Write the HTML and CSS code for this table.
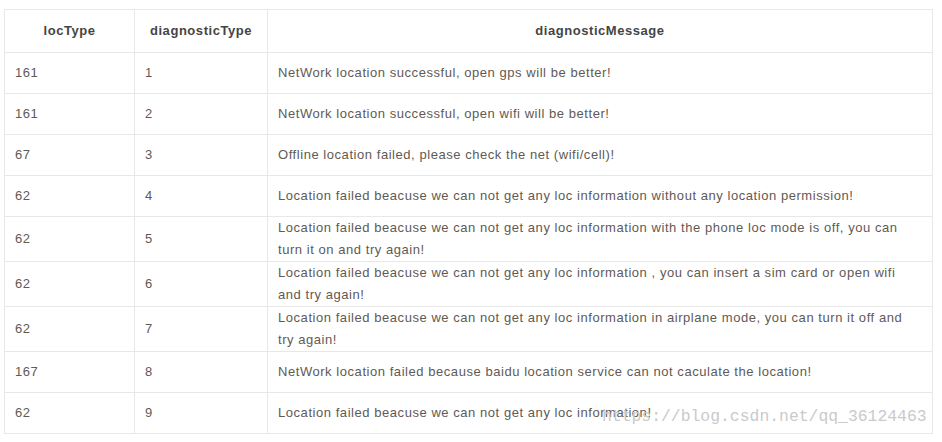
FILE: index.html
```html
<!DOCTYPE html>
<html>
<head>
<meta charset="utf-8">
<link rel="stylesheet" href="styles.css">
</head>
<body>
<div class="wrap">
<table class="diag">
  <colgroup>
    <col class="c1"><col class="c2"><col class="c3">
  </colgroup>
  <thead>
    <tr><th>locType</th><th>diagnosticType</th><th>diagnosticMessage</th></tr>
  </thead>
  <tbody>
    <tr><td>161</td><td>1</td><td class="msg">NetWork location successful, open gps will be better!</td></tr>
    <tr><td>161</td><td>2</td><td class="msg">NetWork location successful, open wifi will be better!</td></tr>
    <tr><td>67</td><td>3</td><td class="msg">Offline location failed, please check the net (wifi/cell)!</td></tr>
    <tr><td>62</td><td>4</td><td class="msg">Location failed beacuse we can not get any loc information without any location permission!</td></tr>
    <tr><td>62</td><td>5</td><td class="msg">Location failed beacuse we can not get any loc information with the phone loc mode is off, you can turn it on and try again!</td></tr>
    <tr><td>62</td><td>6</td><td class="msg">Location failed beacuse we can not get any loc information , you can insert a sim card or open wifi and try again!</td></tr>
    <tr><td>62</td><td>7</td><td class="msg">Location failed beacuse we can not get any loc information in airplane mode, you can turn it off and try again!</td></tr>
    <tr><td>167</td><td>8</td><td class="msg">NetWork location failed because baidu location service can not caculate the location!</td></tr>
    <tr><td>62</td><td>9</td><td class="msg">Location failed beacuse we can not get any loc information!</td></tr>
  </tbody>
</table>
<div class="mark">https://blog.csdn.net/qq_36124463</div>
</div>
</body>
</html>
```
FILE: styles.css
```css
html, body {
  margin: 0;
  padding: 0;
  background: #fff;
}
.wrap {
  position: relative;
  width: 942px;
  height: 442px;
  padding: 9px 0 0 4px;
  box-sizing: border-box;
}
.diag {
  border-collapse: collapse;
  width: 929px;
  table-layout: fixed;
  font-family: "Liberation Sans", Arial, sans-serif;
  font-size: 13px;
  letter-spacing: 0.55px;
  color: #5f5a55;
}
.c1 { width: 130px; }
.c2 { width: 133px; }
.diag th, .diag td {
  border: 1px solid #e8e8e8;
  padding: 0 10px;
  line-height: 22px;
  vertical-align: middle;
}
.diag th {
  height: 42px;
  font-weight: bold;
  color: #454545;
  text-align: center;
}
.diag td {
  height: 40px;
  text-align: left;
}
.diag td.msg {
  padding-right: 22px;
}
.mark {
  position: absolute;
  left: 602px;
  top: 407px;
  font-family: "Liberation Mono", "Courier New", monospace;
  font-size: 16.4px;
  letter-spacing: 0;
  color: #cacaca;
  white-space: nowrap;
}
```
